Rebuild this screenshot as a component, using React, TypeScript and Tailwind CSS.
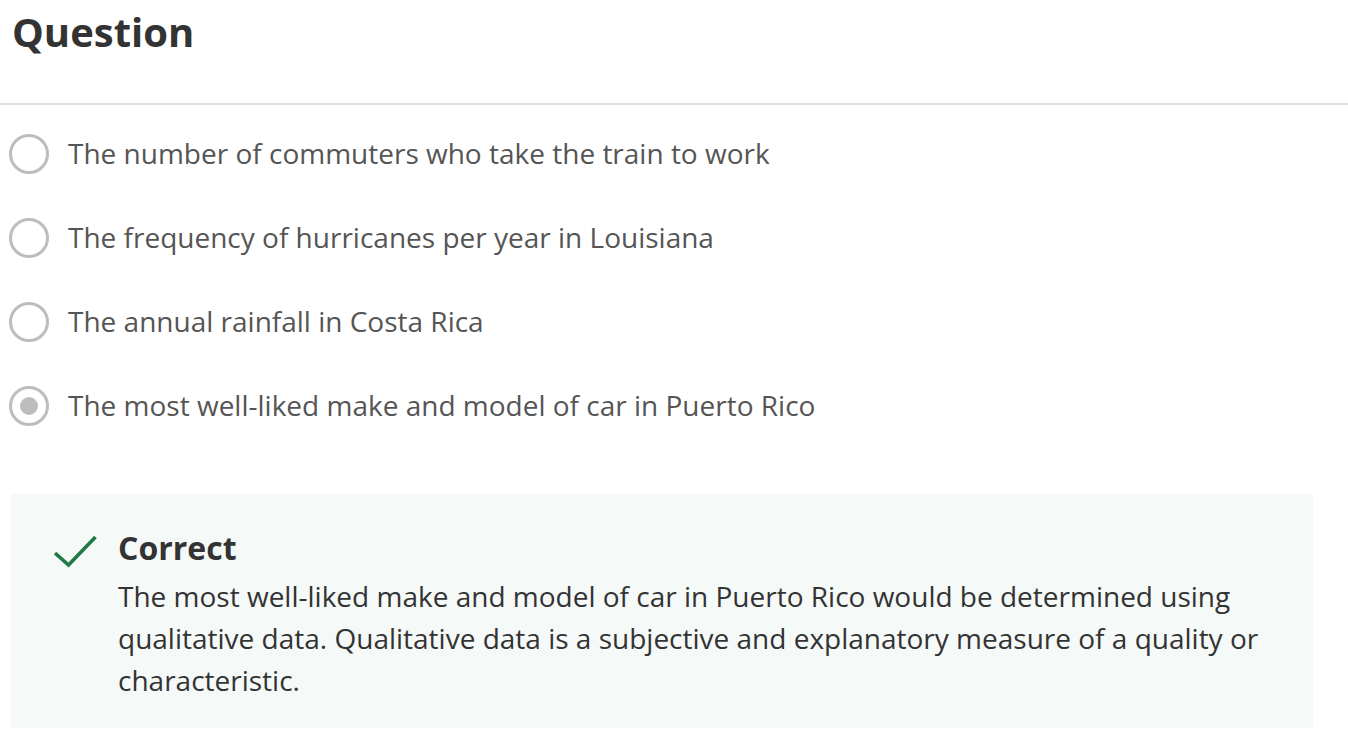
const options = [
  { label: "The number of commuters who take the train to work", selected: false },
  { label: "The frequency of hurricanes per year in Louisiana", selected: false },
  { label: "The annual rainfall in Costa Rica", selected: false },
  { label: "The most well-liked make and model of car in Puerto Rico", selected: true },
];

function Radio({ checked }: { checked: boolean }) {
  return (
    <span className="flex h-[40px] w-[40px] shrink-0 items-center justify-center rounded-full border-[3px] border-[#bdbdbd]">
      {checked && <span className="h-[18px] w-[18px] rounded-full bg-[#bdbdbd]" />}
    </span>
  );
}

export default function App() {
  return (
    <div className="min-h-screen bg-white font-['Open_Sans',sans-serif]">
      <h1 className="flex h-[64px] items-center pl-[12px] text-[40px] font-bold text-[#333]">Question</h1>
      <div className="mt-[39px] h-[2px] w-full bg-[#e0e0e0]" />
      <div className="pt-[7px]">
        {options.map((o) => (
          <label key={o.label} className="flex h-[84px] items-center gap-[19px] pl-[9px]">
            <Radio checked={o.selected} />
            <span className="-mt-[2px] text-[28px] text-[#555]">{o.label}</span>
          </label>
        ))}
      </div>
      <div className="ml-[11px] mt-[46px] flex w-[1302px] gap-[20px] bg-[#f5f9f8] pb-[27px] pl-[43px] pr-[40px] pt-[33px]">
        <svg className="mt-[8px] h-[34px] w-[44px] shrink-0" viewBox="0 0 44 34" fill="none">
          <path d="M1 18 L14.5 30 L41.5 2" stroke="#1f7a45" strokeWidth="3.6" />
        </svg>
        <div>
          <div className="text-[32px] font-bold leading-[42px] text-[#333]">Correct</div>
          <p className="mt-[6px] text-[28px] leading-[42px] text-[#333]">
            The most well-liked make and model of car in Puerto Rico would be determined using qualitative data.
            Qualitative data is a subjective and explanatory measure of a quality or characteristic.
          </p>
        </div>
      </div>
    </div>
  );
}
